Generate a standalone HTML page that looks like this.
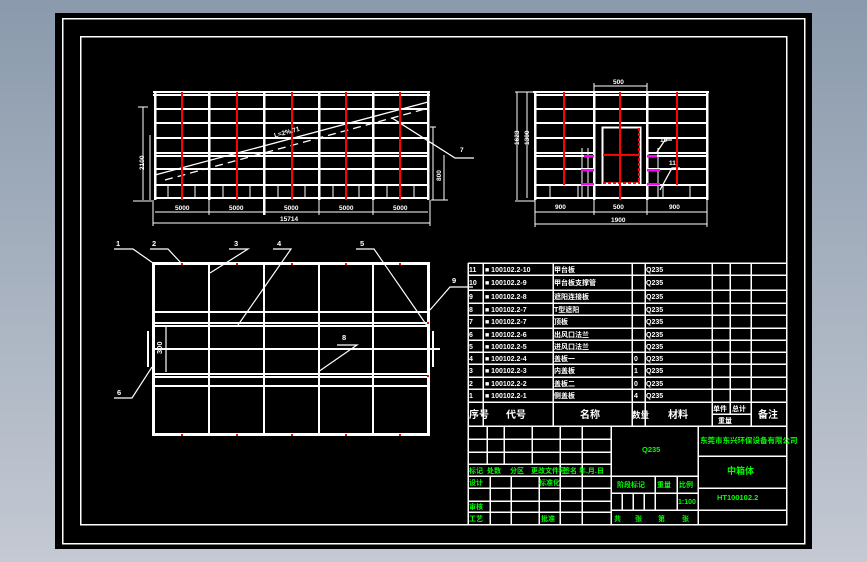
<!DOCTYPE html>
<html><head><meta charset="utf-8"><style>
html,body{margin:0;padding:0;width:867px;height:562px;overflow:hidden;background:linear-gradient(#8a9aac,#c4c9d3);}
svg{position:absolute;left:0;top:0}
text{font-family:"Liberation Sans","Noto Sans CJK SC",sans-serif;font-weight:bold;}
</style></head><body>
<svg width="867" height="562" viewBox="0 0 867 562" shape-rendering="crispEdges">
<rect x="55" y="13" width="757" height="536" fill="#000"/>
<g fill="none" stroke="#fff" stroke-width="1.5">
<rect x="62.5" y="18.5" width="742" height="525"/>
<rect x="80.5" y="36.5" width="706" height="488"/>
</g>

<!-- FRONT VIEW -->
<g stroke="#fff" fill="none">
<g stroke-width="2">
<line x1="153" y1="92" x2="430" y2="92"/><line x1="153" y1="95" x2="430" y2="95"/>
<line x1="155" y1="109" x2="428" y2="109"/><line x1="155" y1="123" x2="428" y2="123"/>
<line x1="155" y1="138" x2="428" y2="138"/><line x1="155" y1="153" x2="428" y2="153"/>
<line x1="155" y1="156" x2="428" y2="156"/><line x1="155" y1="169" x2="428" y2="169"/>
<line x1="155" y1="185" x2="428" y2="185"/><line x1="155" y1="198" x2="428" y2="198"/>
</g>
<g stroke-width="2.5">
<line x1="155" y1="92" x2="155" y2="200"/><line x1="209" y1="92" x2="209" y2="200"/>
<line x1="264" y1="92" x2="264" y2="215"/><line x1="319" y1="92" x2="319" y2="200"/>
<line x1="373" y1="92" x2="373" y2="200"/><line x1="428" y1="92" x2="428" y2="200"/>
</g>
<g stroke-width="1.3">
<line x1="168" y1="185" x2="168" y2="198"/><line x1="195" y1="185" x2="195" y2="198"/>
<line x1="223" y1="185" x2="223" y2="198"/><line x1="250" y1="185" x2="250" y2="198"/>
<line x1="278" y1="185" x2="278" y2="198"/><line x1="305" y1="185" x2="305" y2="198"/>
<line x1="333" y1="185" x2="333" y2="198"/><line x1="359" y1="185" x2="359" y2="198"/>
<line x1="387" y1="185" x2="387" y2="198"/><line x1="414" y1="185" x2="414" y2="198"/>
<line x1="155" y1="175" x2="428" y2="102" shape-rendering="auto"/>
<line x1="165" y1="180" x2="425" y2="109" stroke-dasharray="8 5" shape-rendering="auto"/>
<polyline points="392,118 455,158 474,158" shape-rendering="auto"/>
<line x1="143" y1="107" x2="143" y2="200"/><line x1="138" y1="107" x2="148" y2="107"/>
<line x1="150" y1="135" x2="150" y2="200"/><line x1="133" y1="201" x2="152" y2="201"/>
<line x1="433" y1="127" x2="433" y2="200"/><line x1="430" y1="127" x2="436" y2="127"/>
<line x1="444" y1="155" x2="444" y2="200"/><line x1="431" y1="200" x2="448" y2="200"/>
<line x1="155" y1="212" x2="428" y2="212"/><line x1="153" y1="223" x2="430" y2="223"/>
<line x1="153" y1="200" x2="153" y2="226"/><line x1="430" y1="200" x2="430" y2="226"/>
<line x1="209" y1="200" x2="209" y2="215"/><line x1="319" y1="200" x2="319" y2="215"/><line x1="373" y1="200" x2="373" y2="215"/>
</g>
</g>
<g stroke="#f00" stroke-width="1.6">
<line x1="182" y1="92" x2="182" y2="200"/><line x1="237" y1="92" x2="237" y2="200"/>
<line x1="292" y1="92" x2="292" y2="200"/><line x1="346" y1="92" x2="346" y2="200"/>
<line x1="400" y1="92" x2="400" y2="200"/>
</g>
<g fill="#fff" font-size="6.5">
<text x="175" y="210">5000</text><text x="229" y="210">5000</text><text x="284" y="210">5000</text>
<text x="339" y="210">5000</text><text x="393" y="210">5000</text>
<text x="280" y="221">15714</text>
<text x="274" y="136" transform="rotate(-15 280 134)">L=2%.71</text>
<text x="460" y="152">7</text>
<text x="436" y="182" transform="rotate(-90 438 179)">800</text>
<text x="138" y="172" transform="rotate(-90 140 168)">2100</text>
</g>

<!-- SIDE VIEW -->
<g stroke="#fff" fill="none">
<g stroke-width="2">
<line x1="533" y1="92" x2="709" y2="92"/><line x1="535" y1="95" x2="707" y2="95"/>
<line x1="535" y1="109" x2="707" y2="109"/><line x1="535" y1="123" x2="707" y2="123"/>
<line x1="535" y1="138" x2="594" y2="138"/><line x1="647" y1="138" x2="707" y2="138"/>
<line x1="535" y1="153" x2="594" y2="153"/><line x1="647" y1="153" x2="707" y2="153"/>
<line x1="535" y1="156" x2="594" y2="156"/><line x1="647" y1="156" x2="707" y2="156"/>
<line x1="535" y1="169" x2="594" y2="169"/><line x1="647" y1="169" x2="707" y2="169"/>
<line x1="535" y1="185" x2="707" y2="185"/><line x1="535" y1="198" x2="707" y2="198"/>
</g>
<g stroke-width="2.5">
<line x1="535" y1="92" x2="535" y2="200"/><line x1="594" y1="92" x2="594" y2="200"/>
<line x1="647" y1="92" x2="647" y2="200"/><line x1="707" y1="92" x2="707" y2="200"/>
</g>
<rect x="602.5" y="127.5" width="38" height="56" stroke-width="2"/>
<g stroke-width="1.3">
<line x1="550" y1="185" x2="550" y2="198"/><line x1="578" y1="185" x2="578" y2="198"/>
<line x1="663" y1="185" x2="663" y2="198"/><line x1="690" y1="185" x2="690" y2="198"/>
<line x1="582" y1="148" x2="582" y2="198"/><line x1="588" y1="148" x2="588" y2="198"/>
<line x1="658" y1="148" x2="658" y2="198"/>
<line x1="517" y1="92" x2="517" y2="200"/><line x1="527" y1="92" x2="527" y2="198"/>
<line x1="515" y1="92" x2="533" y2="92"/><line x1="515" y1="201" x2="535" y2="201"/>
<line x1="594" y1="86" x2="647" y2="86"/><line x1="594" y1="83" x2="594" y2="92"/><line x1="647" y1="83" x2="647" y2="92"/>
<line x1="535" y1="212" x2="707" y2="212"/><line x1="535" y1="224" x2="707" y2="224"/>
<line x1="535" y1="200" x2="535" y2="227"/><line x1="707" y1="200" x2="707" y2="227"/>
<line x1="594" y1="200" x2="594" y2="215"/><line x1="647" y1="200" x2="647" y2="215"/>
<polyline points="657,152 665,140 672,140" shape-rendering="auto"/>
<polyline points="660,190 672,168 680,168" shape-rendering="auto"/>
</g>
</g>
<g stroke="#f00" stroke-width="1.6">
<line x1="564" y1="92" x2="564" y2="185"/><line x1="620" y1="92" x2="620" y2="200"/>
<line x1="677" y1="92" x2="677" y2="185"/><line x1="603" y1="155" x2="640" y2="155"/>
<line x1="639" y1="128" x2="639" y2="183" stroke-dasharray="3 2"/><line x1="603" y1="183" x2="640" y2="183" stroke-dasharray="3 2"/>
</g>
<g stroke="#f0f" stroke-width="2.5">
<line x1="584" y1="156" x2="594" y2="156"/><line x1="647" y1="156" x2="657" y2="156"/>
<line x1="581" y1="170" x2="594" y2="170"/><line x1="647" y1="170" x2="660" y2="170"/>
<line x1="581" y1="184" x2="594" y2="184"/><line x1="647" y1="184" x2="660" y2="184"/>
</g>
<g fill="#fff" font-size="6.5">
<text x="613" y="84">500</text><text x="555" y="209">900</text><text x="613" y="209">500</text>
<text x="669" y="209">900</text><text x="611" y="222">1900</text>
<text x="660" y="142">10</text><text x="669" y="165">11</text>
<text x="514" y="150" transform="rotate(-90 514 145)">1623</text>
<text x="524" y="150" transform="rotate(-90 524 145)">1300</text>
</g>

<!-- PLAN VIEW -->
<g stroke="#fff" fill="none">
<rect x="153.5" y="263.5" width="275" height="171" stroke-width="3"/>
<g stroke-width="2">
<line x1="154" y1="312" x2="428" y2="312"/><line x1="154" y1="323" x2="428" y2="323"/>
<line x1="154" y1="326" x2="428" y2="326"/><line x1="154" y1="349" x2="440" y2="349"/>
<line x1="154" y1="374" x2="428" y2="374"/><line x1="154" y1="377" x2="428" y2="377"/>
<line x1="154" y1="386" x2="428" y2="386"/>
<line x1="209" y1="263" x2="209" y2="435"/><line x1="264" y1="263" x2="264" y2="435"/>
<line x1="319" y1="263" x2="319" y2="435"/><line x1="373" y1="263" x2="373" y2="435"/>
<line x1="148" y1="331" x2="148" y2="367"/><line x1="433" y1="331" x2="433" y2="367"/>
</g>
<g stroke-width="1.2" shape-rendering="auto">
<polyline points="114,249 133,249 153,263"/><polyline points="150,249 168,249 181,263"/>
<polyline points="229,249 248,249 210,273"/><polyline points="273,249 291,249 238,325"/>
<polyline points="356,249 374,249 430,330"/><polyline points="473,287 450,287 430,310"/>
<polyline points="337,345 357,345 318,372"/><polyline points="114,398 132,398 152,367"/>
<line x1="166" y1="327" x2="166" y2="372"/>
</g>
</g>
<g fill="#f00">
<rect x="181" y="263" width="2" height="2"/><rect x="236" y="263" width="2" height="2"/><rect x="291" y="263" width="2" height="2"/>
<rect x="345" y="263" width="2" height="2"/><rect x="399" y="263" width="2" height="2"/>
<rect x="181" y="434" width="2" height="2"/><rect x="236" y="434" width="2" height="2"/><rect x="291" y="434" width="2" height="2"/>
<rect x="345" y="434" width="2" height="2"/><rect x="399" y="434" width="2" height="2"/>
<rect x="427" y="322" width="2" height="2"/><rect x="427" y="375" width="2" height="2"/>
</g>
<g fill="#fff" font-size="7.5">
<text x="116" y="246">1</text><text x="152" y="246">2</text><text x="234" y="246">3</text>
<text x="277" y="246">4</text><text x="360" y="246">5</text><text x="452" y="283">9</text>
<text x="342" y="340">8</text><text x="117" y="395">6</text>
<text x="156" y="352" transform="rotate(-90 160 350)">300</text>
</g>

<!-- PARTS LIST -->
<g stroke="#fff" stroke-width="1.5" fill="none">
<line x1="468" y1="263" x2="786" y2="263"/>
<line x1="468" y1="275" x2="786" y2="275"/><line x1="468" y1="290" x2="786" y2="290"/>
<line x1="468" y1="303" x2="786" y2="303"/><line x1="468" y1="315" x2="786" y2="315"/>
<line x1="468" y1="328" x2="786" y2="328"/><line x1="468" y1="340" x2="786" y2="340"/>
<line x1="468" y1="352" x2="786" y2="352"/><line x1="468" y1="364" x2="786" y2="364"/>
<line x1="468" y1="377" x2="786" y2="377"/><line x1="468" y1="389" x2="786" y2="389"/>
<line x1="468" y1="402" x2="786" y2="402"/><line x1="712" y1="414" x2="751" y2="414"/>
<line x1="468" y1="426" x2="786" y2="426"/>
<line x1="468" y1="263" x2="468" y2="525"/><line x1="483" y1="263" x2="483" y2="426"/>
<line x1="553" y1="263" x2="553" y2="426"/><line x1="632" y1="263" x2="632" y2="426"/>
<line x1="645" y1="263" x2="645" y2="426"/><line x1="712" y1="263" x2="712" y2="426"/>
<line x1="730" y1="263" x2="730" y2="414"/><line x1="751" y1="263" x2="751" y2="426"/>
<line x1="468" y1="439" x2="611" y2="439"/><line x1="468" y1="452" x2="611" y2="452"/>
<line x1="468" y1="464" x2="611" y2="464"/><line x1="468" y1="476" x2="698" y2="476"/>
<line x1="468" y1="488" x2="611" y2="488"/><line x1="468" y1="501" x2="611" y2="501"/>
<line x1="468" y1="512" x2="611" y2="512"/>
<line x1="487" y1="426" x2="487" y2="464"/><line x1="504" y1="426" x2="504" y2="464"/>
<line x1="532" y1="426" x2="532" y2="464"/><line x1="560" y1="426" x2="560" y2="525"/>
<line x1="582" y1="426" x2="582" y2="525"/><line x1="611" y1="426" x2="611" y2="525"/>
<line x1="490" y1="476" x2="490" y2="525"/><line x1="511" y1="476" x2="511" y2="525"/>
<line x1="539" y1="476" x2="539" y2="525"/>
<line x1="611" y1="493" x2="698" y2="493"/><line x1="611" y1="510" x2="786" y2="510"/>
<line x1="655" y1="476" x2="655" y2="510"/><line x1="677" y1="476" x2="677" y2="510"/>
<line x1="622" y1="493" x2="622" y2="510"/><line x1="633" y1="493" x2="633" y2="510"/>
<line x1="644" y1="493" x2="644" y2="510"/>
<line x1="698" y1="426" x2="698" y2="525"/>
<line x1="698" y1="456" x2="786" y2="456"/><line x1="698" y1="488" x2="786" y2="488"/>
</g>
<g fill="#fff" font-size="7">
<text x="469" y="272">11</text><text x="469" y="285">10</text><text x="469" y="299">9</text>
<text x="469" y="312">8</text><text x="469" y="324">7</text><text x="469" y="337">6</text>
<text x="469" y="349">5</text><text x="469" y="361">4</text><text x="469" y="373">3</text>
<text x="469" y="386">2</text><text x="469" y="398">1</text>
<text x="485" y="272">■ 100102.2-10</text><text x="485" y="285">■ 100102.2-9</text>
<text x="485" y="299">■ 100102.2-8</text><text x="485" y="312">■ 100102.2-7</text>
<text x="485" y="324">■ 100102.2-7</text><text x="485" y="337">■ 100102.2-6</text>
<text x="485" y="349">■ 100102.2-5</text><text x="485" y="361">■ 100102.2-4</text>
<text x="485" y="373">■ 100102.2-3</text><text x="485" y="386">■ 100102.2-2</text>
<text x="485" y="398">■ 100102.2-1</text>
<text x="554" y="272">甲台板</text><text x="554" y="285">甲台板支撑管</text>
<text x="554" y="299">遮阳连接板</text><text x="554" y="312">T型遮阳</text>
<text x="554" y="324">顶板</text><text x="554" y="337">出风口法兰</text>
<text x="554" y="349">进风口法兰</text><text x="554" y="361">盖板一</text>
<text x="554" y="373">内盖板</text><text x="554" y="386">盖板二</text>
<text x="554" y="398">侧盖板</text>
<text x="634" y="361">0</text><text x="634" y="373">1</text><text x="634" y="386">0</text><text x="634" y="398">4</text>
<text x="646" y="272">Q235</text><text x="646" y="285">Q235</text><text x="646" y="299">Q235</text>
<text x="646" y="312">Q235</text><text x="646" y="324">Q235</text><text x="646" y="337">Q235</text>
<text x="646" y="349">Q235</text><text x="646" y="361">Q235</text><text x="646" y="373">Q235</text>
<text x="646" y="386">Q235</text><text x="646" y="398">Q235</text>
<text x="713" y="411">单件</text><text x="732" y="411">总计</text><text x="718" y="423">重量</text>
</g>
<g fill="#fff" font-size="10">
<text x="469" y="418">序号</text><text x="506" y="418">代号</text><text x="580" y="418">名称</text>
<text x="632" y="418" font-size="8.5">数量</text><text x="668" y="418">材料</text><text x="758" y="418">备注</text>
</g>
<g fill="#0f0" font-size="7">
<text x="469" y="473">标记</text><text x="487" y="473">处数</text><text x="510" y="473">分区</text>
<text x="531" y="473">更改文件号</text><text x="563" y="473">签名 年.月.日</text>
<text x="469" y="485">设计</text><text x="539" y="485">标准化</text>
<text x="469" y="509">审核</text><text x="469" y="521">工艺</text><text x="541" y="521">批准</text>
<text x="617" y="487">阶段标记</text><text x="657" y="487">重量</text><text x="679" y="487">比例</text>
<text x="678" y="504">1:100</text>
<text x="614" y="521">共</text><text x="635" y="521">张</text><text x="658" y="521">第</text><text x="682" y="521">张</text>
<text x="642" y="452" font-size="7.5">Q235</text>
<text x="700" y="443" font-size="7.5">东莞市东兴环保设备有限公司</text>
<text x="727" y="474" font-size="9">中箱体</text>
<text x="717" y="500" font-size="7.5">HT100102.2</text>
</g>
</svg>
</body></html>
